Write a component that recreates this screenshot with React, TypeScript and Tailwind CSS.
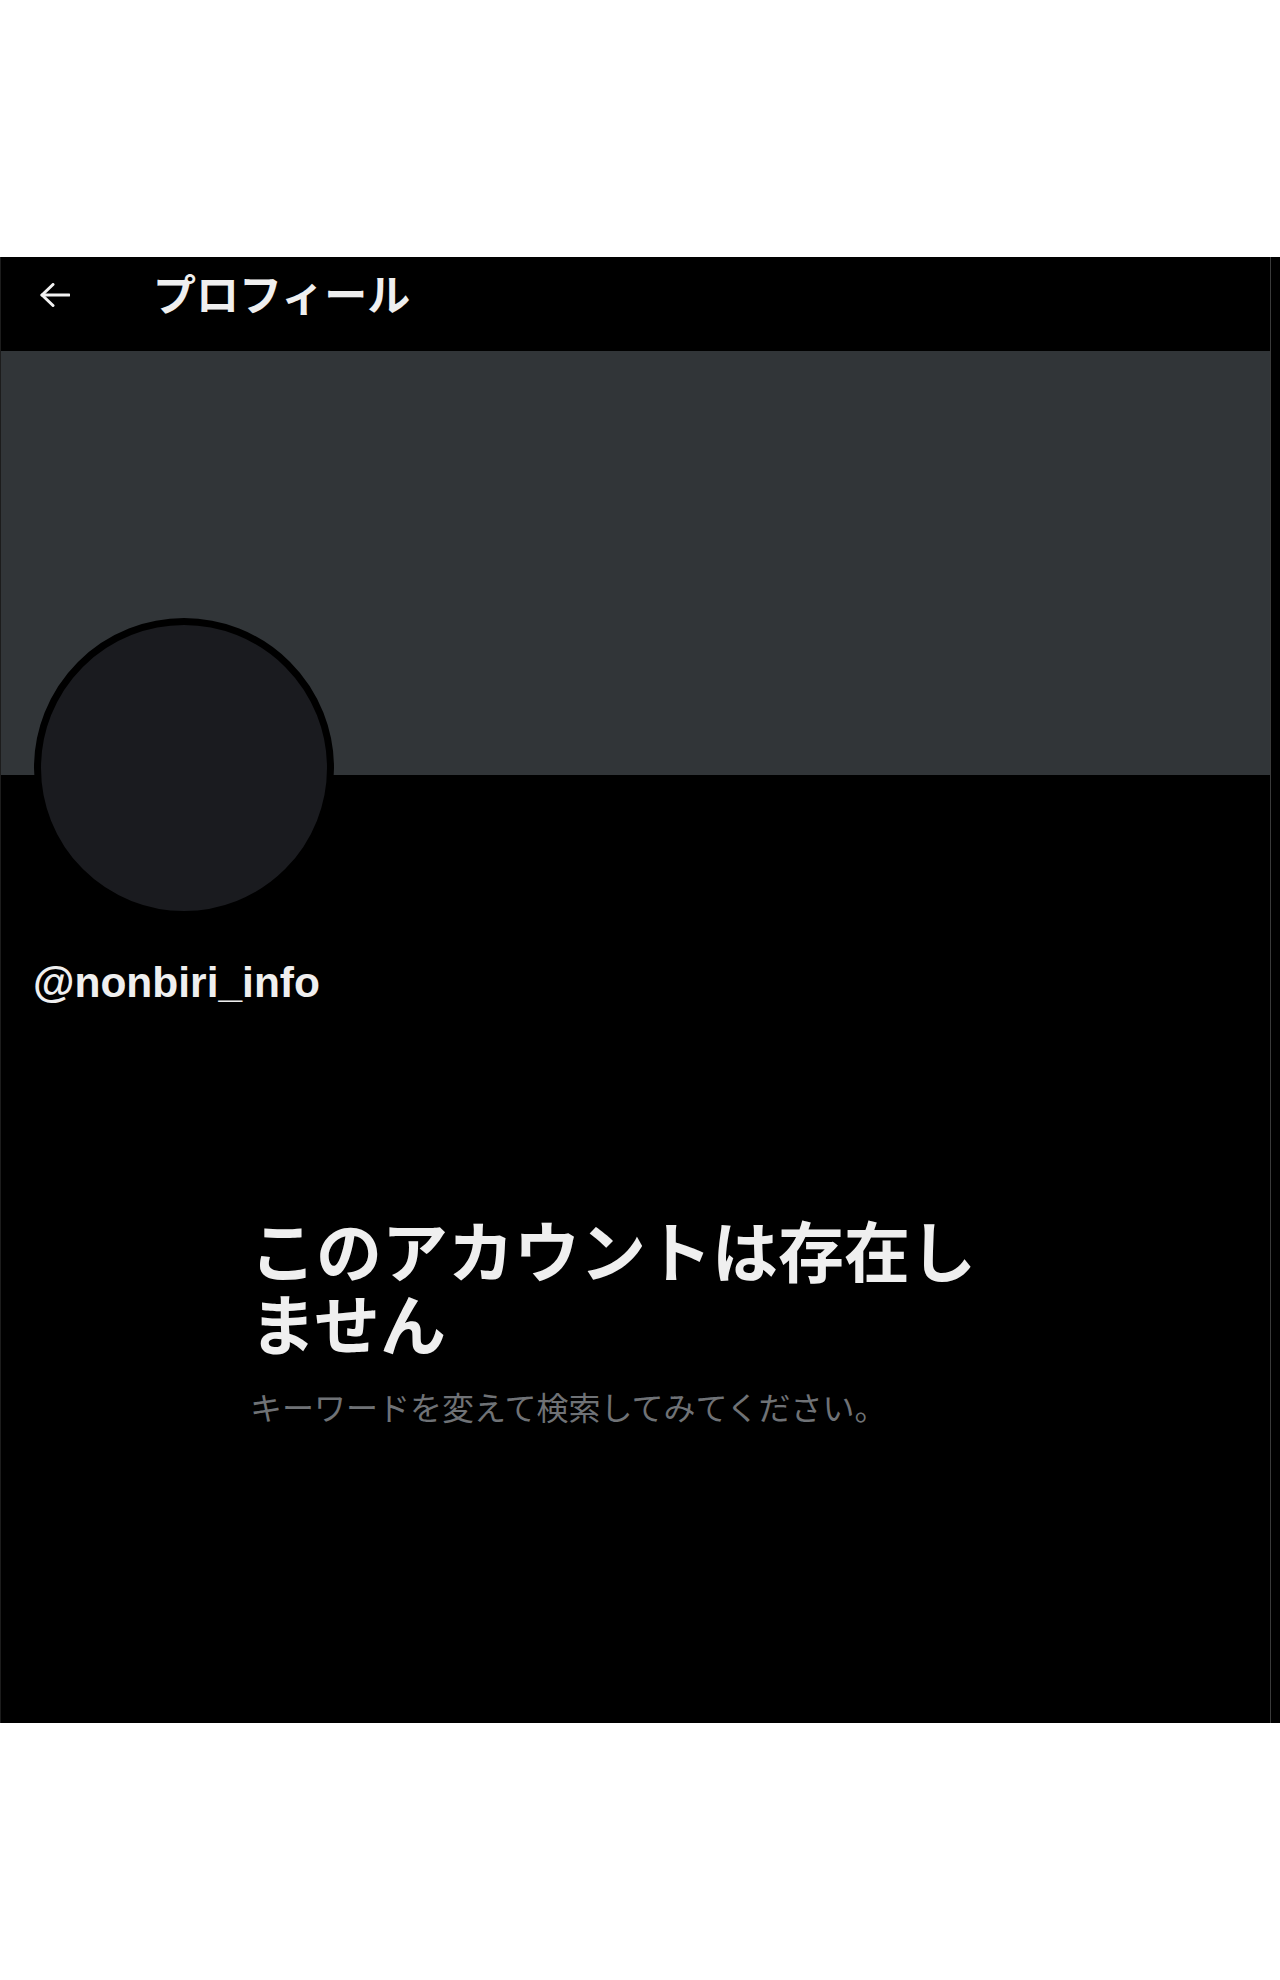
import React from "react";

const jp = { fontFamily: '"Noto Sans CJK JP", "Noto Sans", sans-serif' };
const latin = { fontFamily: '"Liberation Sans", Arial, sans-serif' };

export default function App() {
  return (
    <div className="w-[1280px] h-[1980px] bg-white pt-[257px]">
      <div className="flex h-[1466px] bg-black">
        <div className="w-[1270px] flex flex-col border-l border-[#1c1c1c]">
          {/* header */}
          <div className="h-[94px] flex items-start shrink-0">
            <svg
              className="ml-[39px] mt-[26px]"
              width="30"
              height="24"
              viewBox="0 0 30 24"
              fill="none"
              stroke="#f2f2f2"
              strokeWidth="3"
              strokeLinecap="round"
              strokeLinejoin="round"
            >
              <path d="M13 1.5 L2 12 L13 22.5" />
              <path d="M2 12 H29" />
            </svg>
            <div
              className="ml-[83px] mt-[14px] text-[43px] leading-[43px] font-bold text-[#efefef]"
              style={jp}
            >
              プロフィール
            </div>
          </div>
          {/* banner */}
          <div className="h-[424px] w-[1269px] bg-[#313538] shrink-0" />
          {/* avatar */}
          <div className="-mt-[157px] ml-[33px] w-[300px] h-[300px] rounded-full border-[7px] border-black bg-[#1a1b1f] shrink-0" />
          {/* handle */}
          <div
            className="mt-[44px] ml-[32px] text-[42.5px] leading-[42px] font-bold text-[#efefef]"
            style={latin}
          >
            @nonbiri_info
          </div>
          {/* message */}
          <div className="mt-[208px] ml-[249px] w-[758px]">
            <div
              className="text-[66px] leading-[73px] font-bold text-[#efefef]"
              style={jp}
            >
              このアカウントは存在しません
            </div>
            <div
              className="mt-[28px] text-[32px] leading-[40px] text-[#6f7276]"
              style={jp}
            >
              キーワードを変えて検索してみてください。
            </div>
          </div>
        </div>
        <div className="w-px bg-[#3a3a3a]" />
        <div className="flex-1 bg-black" />
      </div>
    </div>
  );
}
